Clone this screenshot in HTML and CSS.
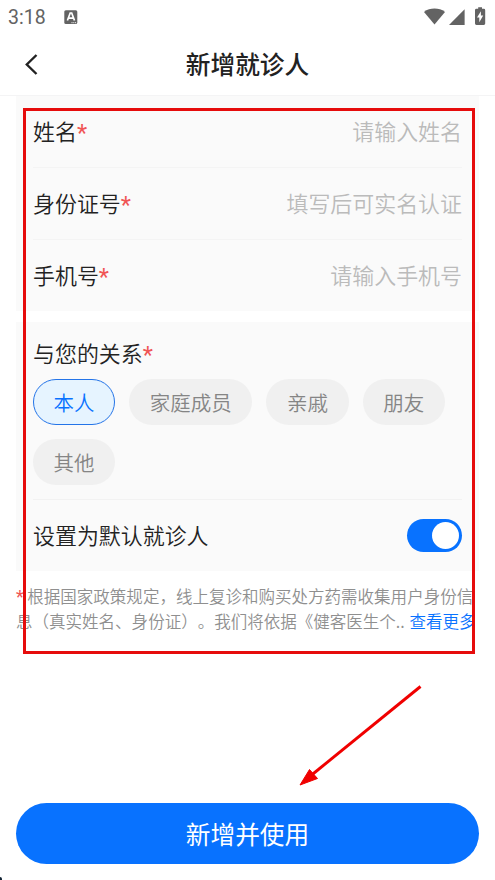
FILE: index.html
```html
<!DOCTYPE html>
<html lang="zh-CN">
<head>
<meta charset="utf-8">
<title>新增就诊人</title>
<link rel="stylesheet" href="styles.css">
</head>
<body>
<div class="screen">
  <div class="status">
    <span class="time">3:18</span>
    <svg class="app-badge" width="14" height="15" viewBox="0 0 14 15"><rect x=".3" y=".3" width="13" height="13.8" rx="1.5" fill="#636363"/><path d="M3.4 10.5 6.2 3h1.5l2.8 7.5M4.7 8.2h4.6" fill="none" stroke="#fff" stroke-width="1.7"/><path d="M7.5 12.7h4.8" stroke="#fff" stroke-width="1" stroke-dasharray="1 .8"/></svg>
    <svg class="signals" width="62" height="20" viewBox="0 0 62 20" fill="#636363">
      <path d="M0 4.9C6 .5 15 .5 21 4.9L10.5 17.4z"/>
      <path d="M40.6 2.2v15.7H25z"/>
      <path d="M51 3.2q0-1.4 1.4-1.4h1.8V.2h3.8v1.6h1.8q1.4 0 1.4 1.4v13.4q0 1.4-1.4 1.4h-7.4q-1.4 0-1.4-1.4z"/>
      <path d="M56.9 4.2v4.3h2.3l-3.9 6.8v-4.8H53z" fill="#fff"/>
    </svg>
  </div>
  <header class="nav">
    <svg class="back" width="14" height="22" viewBox="0 0 14 22"><path d="M11.5 1 1.8 10.5 11.5 20" fill="none" stroke="#222" stroke-width="2.4"/></svg>
    <h1>新增就诊人</h1>
  </header>
  <main>
    <section class="card fields">
      <div class="row name"><label>姓名<i>*</i></label><span class="hint">请输入姓名</span></div>
      <div class="row"><label>身份证号<i>*</i></label><span class="hint">填写后可实名认证</span></div>
      <div class="row"><label>手机号<i>*</i></label><span class="hint">请输入手机号</span></div>
    </section>
    <section class="card relation">
      <div class="label">与您的关系<i>*</i></div>
      <div class="chips">
        <span class="chip active">本人</span><span class="chip">家庭成员</span><span class="chip">亲戚</span><span class="chip">朋友</span><span class="chip">其他</span>
      </div>
      <div class="default"><span class="default-text">设置为默认就诊人</span><span class="switch"></span></div>
    </section>
    <p class="notice"><i>*</i>根据国家政策规定，线上复诊和购买处方药需收集用户身份信<br>息（真实姓名、身份证）。我们将依据《健客医生个.. <a>查看更多</a></p>
  </main>
  <button class="submit">新增并使用</button>
  <div class="highlight"></div>
  <svg class="arrow" width="130" height="110" viewBox="0 0 130 110"><path d="M124.500 7.500 15 96.500" stroke="#f00000" stroke-width="2.900"/><path d="M4 106 13.500 90.500 21.500 99.500z" fill="#f00000" stroke="#f00000" stroke-width="1"/></svg>
  <span class="corner"></span>
</div>
</body>
</html>
```
FILE: styles.css
```css
* { box-sizing: border-box; }
body { margin: 0; background: #fff; color: #222; font-family: "Noto Sans CJK SC", sans-serif; font-size: 21.95px; font-weight: 350; }
i { font: 23.5px/1 Roboto, sans-serif; color: #f05555; vertical-align: -1px; line-height: 0; }
.screen { position: relative; width: 495px; height: 880px; overflow: hidden; display: flex; flex-direction: column; }
.status { height: 34px; flex: none; display: flex; align-items: center; padding: 0 9px 0 8px; }
.time { font: 19.5px/34px Roboto, sans-serif; color: #636363; padding-top: 2px; }
.app-badge { margin-left: 18px; }
.signals { margin-left: auto; }
.nav { height: 62px; flex: none; display: grid; grid-template-columns: 48px 1fr 48px; align-items: center; border-bottom: 1px solid #f4f4f5; }
.back { margin-left: 25px; }
h1 { margin: 0; padding-bottom: 3px; text-align: center; font-size: 24.7px; font-weight: 500; line-height: 36px; }
main { padding: 0 16px; }
.card { background: #fafafa; padding: 0 17px; }
.row { height: 72px; display: flex; align-items: center; justify-content: space-between; border-top: 1px solid #f4f4f4; padding-bottom: 2px; }
.row.name { height: 71px; border-top: 0; }
.hint { color: #bbb; }
.relation { margin-top: 11px; height: 249px; }
.label { padding-top: 15px; height: 57px; line-height: 32px; }
.chips { display: flex; flex-wrap: wrap; gap: 14px; }
.chip { height: 46px; line-height: 47px; border-radius: 23px; padding: 0 20.6px; background: #f0f0f0; color: #858585; font-size: 20.5px; }
.chip.active { background: #e6f4ff; color: #0872ff; border: 1.5px solid #2474e8; line-height: 45px; padding: 0 19.6px; }
.default { height: 72px; margin-top: 14px; border-top: 1px solid #f2f2f2; display: flex; align-items: center; justify-content: space-between; }
.default-text { padding-bottom: 3px; }
.switch { width: 55px; height: 33px; border-radius: 17px; background: #0872ff; display: flex; align-items: center; justify-content: flex-end; padding-right: 3px; }
.switch::before { content: ""; width: 27px; height: 27px; border-radius: 50%; background: #fff; }
.notice { margin: 13px 0 0; font-size: 16.53px; line-height: 24.5px; color: #8f8f8f; white-space: nowrap; text-spacing-trim: space-all; font-kerning: none; }
.notice i { font-size: 18px; line-height: 0; vertical-align: 0; margin-right: 3.5px; }
.notice a { color: #0872ff; margin-left: 1px; }
.submit { margin: auto 16px 16.5px; height: 60.5px; flex: none; border: 0; border-radius: 31px; background: #0872ff; color: #fff; font: 24.7px/60px "Noto Sans CJK SC", sans-serif; padding: 0; }
.highlight { position: absolute; left: 23px; top: 108px; width: 452px; height: 546px; border: 3px solid #e60c0c; }
.arrow { position: absolute; left: 296px; top: 679px; }
.corner { position: absolute; left: 0; bottom: 0; width: 2px; height: 3px; background: #123; border-top-right-radius: 2px; }
```
